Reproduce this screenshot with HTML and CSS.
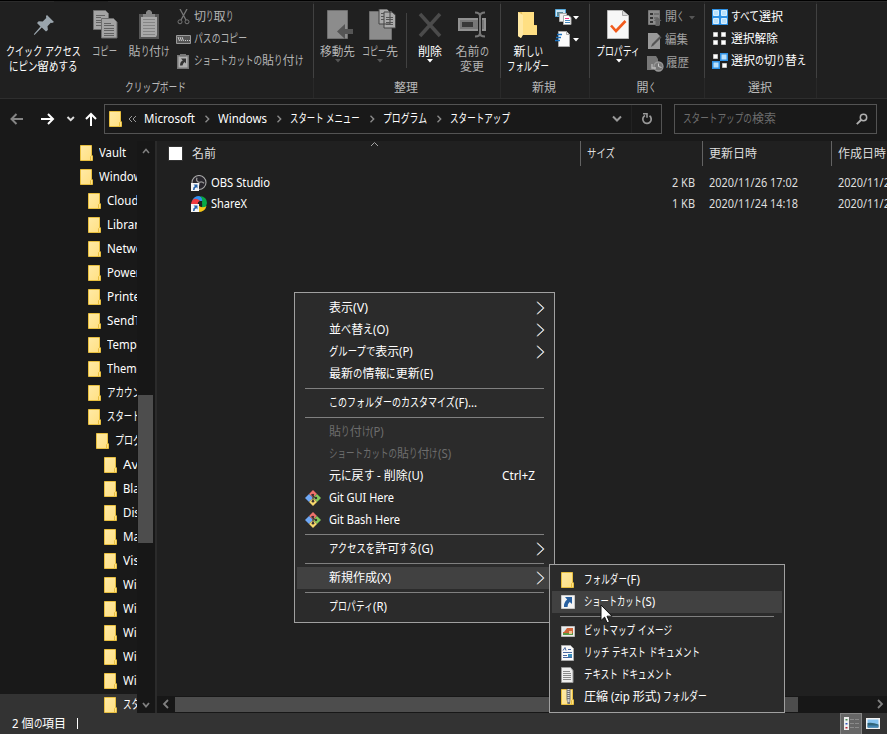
FILE: index.html
```html
<!DOCTYPE html>
<html lang="ja">
<head>
<meta charset="utf-8">
<title>スタートアップ</title>
<link rel="stylesheet" href="styles.css">
</head>
<body>
<svg class="defs" width="0" height="0">
  <defs>
    <linearGradient id="fg" x1="0" y1="0" x2="1" y2="1"><stop offset="0" stop-color="#ffeaa6"/><stop offset="1" stop-color="#ffdf80"/></linearGradient>
    <symbol id="folder" viewBox="0 0 13 16"><path d="M.5.5h11v9.500l1 1v4.500H.5z" fill="url(#fg)" stroke="#e8bf3f"/><path d="M10.500 15.500v-4l1.500-1.500" fill="none" stroke="#e8bf3f"/></symbol>
    <symbol id="git" viewBox="0 0 16 16"><path d="M8 0l4 4-4 4-4-4z" fill="#f0716b"/><path d="M4 4l4 4-4 4-4-4z" fill="#6fa8f5"/><path d="M12 4l4 4-4 4-4-4z" fill="#86c95a"/><path d="M8 8l4 4-4 4-4-4z" fill="#f7d86c"/><path d="M8 4v8M6 4.500l4.500 3.500" stroke="#3a3030" stroke-width="1"/><circle cx="8" cy="4.800" r="1.100" fill="#3a3030"/><circle cx="8" cy="11.300" r="1.300" fill="#3a3030"/><circle cx="11" cy="8" r="1.200" fill="#3a3030"/></symbol>
    <symbol id="link" viewBox="0 0 8 8"><path d="M0 0h8v8H0z" fill="#f4f4f4"/><path d="M2.500 1.500h4v4L5.300 4.300Q3.500 5 3.500 7H2q-.2-2.800 2-4z" fill="#2563ab"/></symbol>
    <symbol id="more" viewBox="0 0 9 14"><g fill="none"><path d="M.6 1l6.500 6-6.500 6" stroke="#4d9be0"/><path d="M1.700 1l6.500 6-6.500 6" stroke="#e0a868"/><path d="M1.200 1l6.500 6-6.500 6" stroke="#f4f4f4" stroke-width=".8"/></g></symbol>
    <symbol id="sep" viewBox="0 0 6 8"><path d="M1.500.8L4.700 4 1.500 7.200" fill="none" stroke="#8a8a8a" stroke-width="1.400"/></symbol>
    <symbol id="tri" viewBox="0 0 6 4"><path d="M0 0h6L3 3.500z" fill="currentColor"/></symbol>
  </defs>
</svg>
<div class="window">
  <div class="tabline"><i></i></div>
  <div class="ribbon">
    <section class="group g-clip">
      <div class="tools">
        <div class="big w88 on"><div class="ico"><svg width="22" height="22" viewBox="0 0 22 22"><path d="M14 1l7 7-2 1-1.200-.2-3.300 3.400.4 3.800-1.900 1.500-4.200-4L1.500 21 .8 20.300 7.500 12.500 4 9l1.700-1.700 4 .3 3.500-3.500L13 2z" fill="#9aa5ad"/></svg></div><span class="t" data-w="75">クイック アクセス</span><span class="t" data-w="69">にピン留めする</span></div>
        <div class="big w33"><div class="ico"><svg width="25" height="29" viewBox="0 0 25 29"><g fill="#a4a4a4" stroke="#6d6d6d"><path d="M.5.500h12l3 3v16H.5z"/><path d="M8.500 8.500h12l3.500 3.500v16H8.500z"/></g><path d="M3 5.500h9M3 7.500h5M3 10.500h5M3 12.500h5M3 15.500h5M11 13.500h7M11 15.500h10M11 18.500h10M11 20.500h10M11 23.500h10M11 25.500h10" stroke="#626262"/></svg></div><span class="t" data-w="25">コピー</span></div>
        <div class="big w56"><div class="ico"><svg width="20" height="29" viewBox="0 0 20 29"><path d="M0 4h20v25H0z" fill="#575757"/><path d="M2 7h16v18l-1 2H2z" fill="#a9a9a9"/><path d="M4 4h3V2l2-2h2l2 2v2h3v3H4z" fill="#858585"/><path d="M4 9.500h12M4 12.500h12M4 15.500h12M4 18.500h12M4 21.500h12M4 24.500h12" stroke="#858585"/></svg></div><span class="t" data-w="41">貼り付け</span></div>
        <div class="smalls">
          <div class="small"><svg width="16" height="16" viewBox="0 0 16 16"><path d="M4 0l6 11M11 0L5 11" stroke="#777" stroke-width="1.300"/><circle cx="4" cy="12.800" r="2" fill="none" stroke="#777"/><circle cx="11" cy="12.800" r="2" fill="none" stroke="#777"/></svg><span class="t" data-w="39">切り取り</span></div>
          <div class="small"><svg width="16" height="16" viewBox="0 0 16 16"><path d="M.5 4.500h14v8H.5z" fill="#555" stroke="#999"/><path d="M2 6l1.500 4M4 6l1.500 4M6 6l1.500 4M9 9.500h1M11 9.500h1M13 9.500h1" stroke="#ccc"/></svg><span class="t" data-w="53">パスのコピー</span></div>
          <div class="small"><svg width="16" height="16" viewBox="0 0 16 16"><path d="M1 2h12v14H1z" fill="#777"/><path d="M2.500 3.500h9v11h-9z" fill="#b0b0b0"/><path d="M4 3.500V1h6v2.500" fill="#777"/><path d="M5 5.500h5v5L8.600 9Q7 10 6.500 12.500H4q0-4 2.800-5z" fill="#333"/></svg><span class="t" data-w="109">ショートカットの貼り付け</span></div>
        </div>
      </div>
      <div class="cap"><span class="t" data-w="61">クリップボード</span></div>
    </section>
    <section class="group g-org">
      <div class="tools">
        <div class="big w43 arr"><div class="ico r3"><svg width="27" height="29" viewBox="0 0 27 29"><path d="M.5.500h20v28H.5z" fill="#8c8c8c" stroke="#6f6f6f"/><path d="M18 14v5h8v5h-8v5l-8-7.500z" fill="#555"/></svg></div><span class="t" data-w="35">移動先</span><svg class="tri" width="6" height="4"><use href="#tri"/></svg></div>
        <div class="big w37 arr"><div class="ico r2"><svg width="27" height="31" viewBox="0 0 27 31"><path d="M.5 2.500h22v28H.5z" fill="#8c8c8c" stroke="#6f6f6f"/><path d="M10 0h8l3 3v12H10zM15 3h8l3.500 3v13H15z" fill="#aaa" stroke="#444"/><path d="M12 4.500h3M12 7.500h3M12 10.500h3M17 8.500h7M17 10.500h7M17 13.500h7M17 15.500h7" stroke="#555"/></svg></div><span class="t" data-w="36">コピー先</span><svg class="tri" width="6" height="4"><use href="#tri"/></svg></div>
        <i class="vline"></i>
        <div class="big w42 on arr"><div class="ico"><svg width="24" height="26" viewBox="0 0 24 26"><path d="M2 2l20 22M22 2L2 24" stroke="#4b4b4b" stroke-width="3.500"/></svg></div><span class="t" data-w="24">削除</span><svg class="tri" width="6" height="4"><use href="#tri"/></svg></div>
        <div class="big w42"><div class="ico"><svg width="28" height="27" viewBox="0 0 28 27"><path d="M1 8h26v11H1z" fill="#777" stroke="#919191" stroke-width="2"/><path d="M4 11h11v5H4z" fill="#383838"/><path d="M20 6h4v15h-4z" fill="#202020"/><path d="M17 1.500q5 0 5 3.500v17q0 3.500-5 3.500M27 1.500q-5 0-5 3.500M22 22q0 3.500 5 3.500" fill="none" stroke="#777" stroke-width="2"/></svg></div><span class="t" data-w="33">名前の</span><span class="t" data-w="24">変更</span></div>
      </div>
      <div class="cap"><span class="t" data-w="24">整理</span></div>
    </section>
    <section class="group g-new">
      <div class="tools">
        <div class="big w54 on"><div class="ico"><svg class="nf" width="19" height="28" viewBox="0 0 19 28"><path d="M0 1h16v13h3v10H4l-1 3-3-2z" fill="#eac35c"/><path d="M4 1h12v13l3 1v9H5z" fill="#ffdf83"/><path d="M0 1l5 3v20l-2 3-3-2z" fill="#ffe8a3"/></svg></div><span class="t" data-w="29">新しい</span><span class="t" data-w="42">フォルダー</span></div>
        <div class="pair">
          <div class="on"><svg width="17" height="17" viewBox="0 0 17 17"><path d="M.5.500h10v7H.5z" fill="#cce6f5" stroke="#57a9db"/><path d="M2 3h6v4H2z" fill="#5a8999"/><path d="M4.500 4.500h7v8h-7z" fill="#efefef" stroke="#aaa"/><path d="M8.500 6.500h5l2.500 2v7H8.500z" fill="#fff" stroke="#aaa"/><path d="M10 9.500h4" stroke="#e38"/><path d="M10 11.500h5M10 13.500h5" stroke="#48b"/></svg><svg class="tri" width="6" height="4"><use href="#tri"/></svg></div>
          <div class="on"><svg width="17" height="17" viewBox="0 0 17 17"><path d="M3.500.500h8l3 3v12h-11z" fill="#fafafa" stroke="#aaa"/><path d="M11.500.500v3h3" fill="none" stroke="#aaa"/><path d="M2 3.500h5M1 6.500h5M0 9.500h5" stroke="#1b70bd" stroke-width="1.500"/></svg><svg class="tri" width="6" height="4"><use href="#tri"/></svg></div>
        </div>
      </div>
      <div class="cap"><span class="t" data-w="24">新規</span></div>
    </section>
    <section class="group g-open">
      <div class="tools">
        <div class="big w58 on arr"><div class="ico"><svg width="22" height="29" viewBox="0 0 22 29"><path d="M.5.500h15l6 5v23H.5z" fill="#f7f7f7" stroke="#b9b9b9"/><path d="M15.500.500v5h5" fill="#ddd" stroke="#aaa"/><path d="M4 15.500l5 5.500 9.500-10" fill="none" stroke="#f15a1c" stroke-width="2.600"/></svg></div><span class="t" data-w="44">プロパティ</span><svg class="tri" width="6" height="4"><use href="#tri"/></svg></div>
        <div class="smalls open">
          <div class="small dim"><svg width="16" height="16" viewBox="0 0 16 16"><path d="M1.500.500h11v14h-11z" fill="#8c8c8c" stroke="#777"/><path d="M3 3h3v2H3zM3 7h3v2H3zM3 11h3v2H3z" fill="#333"/><path d="M7 4h5M7 8h3" stroke="#555"/><path d="M10.500 7l4 4h-2v5h-4v-5h-2z" fill="#666"/></svg><span class="t" data-w="19">開く</span><svg class="tri" width="6" height="4"><use href="#tri"/></svg></div>
          <div class="small dim"><svg width="16" height="16" viewBox="0 0 16 16"><path d="M1 0h9l3 3v13H1z" fill="#999"/><path d="M4 14l1-3 8-8 1.500 1.500-8 8z" fill="#555"/></svg><span class="t" data-w="23">編集</span></div>
          <div class="small dim"><svg width="17" height="16" viewBox="0 0 17 16"><path d="M0 0h9l2 3v11H0z" fill="#777"/><circle cx="11.500" cy="10.500" r="4.500" fill="#777" stroke="#999" stroke-width="1.300"/><path d="M11.500 7.500v3l3 1" fill="none" stroke="#ccc"/><path d="M5 8v4h4" fill="none" stroke="#bbb" stroke-width="1.300"/></svg><span class="t" data-w="23">履歴</span></div>
        </div>
      </div>
      <div class="cap"><span class="t" data-w="19">開く</span></div>
    </section>
    <section class="group g-sel">
      <div class="tools">
        <div class="smalls sel">
          <div class="small on"><svg width="16" height="16" viewBox="0 0 16 16"><path d="M0 0h16v16H0z" fill="#2f91e4"/><path d="M1.500 1.500h5v5h-5zM9.500 1.500h5v5h-5zM1.500 9.500h5v5h-5zM9.500 9.500h5v5h-5z" fill="#b9e0fb" stroke="#d8efff"/></svg><span class="t" data-w="52">すべて選択</span></div>
          <div class="small on"><svg width="16" height="16" viewBox="0 0 16 16"><path d="M1.500 1.500h4v4h-4zM9.500 1.500h4v4h-4zM1.500 9.500h4v4h-4zM9.500 9.500h4v4h-4z" fill="#fff" stroke="#c3c3c3"/></svg><span class="t" data-w="47">選択解除</span></div>
          <div class="small on"><svg width="16" height="16" viewBox="0 0 16 16"><path d="M8 0h8v8H8zM0 8h8v8H0z" fill="#2f91e4"/><path d="M9.500 1.500h5v5h-5zM1.500 9.500h5v5h-5z" fill="#b9e0fb"/><path d="M1.500 1.500h4v4h-4zM10.500 10.500h4v4h-4z" fill="#fff" stroke="#c3c3c3"/></svg><span class="t" data-w="75">選択の切り替え</span></div>
        </div>
      </div>
      <div class="cap"><span class="t" data-w="24">選択</span></div>
    </section>
  </div>

  <nav class="navbar">
    <div class="arrows">
      <svg width="94" height="16" viewBox="0 0 94 16" fill="none" stroke-width="2"><path d="M13 8H1.500M6.500 3l-5 5 5 5" stroke="#858585"/><path d="M31 8h12M38 3l5 5-5 5" stroke="#fff"/><path d="M57.500 6l3.200 3.200L63.900 6" stroke="#ddd"/><path d="M81 15V3M76 8l5-5 5 5" stroke="#fff"/></svg>
    </div>
    <div class="address">
      <svg class="af" width="13" height="16"><use href="#folder"/></svg>
      <svg class="dbl" width="9" height="8" viewBox="0 0 9 8"><path d="M4 1L1 4l3 3M8 1L5 4l3 3" fill="none" stroke="#999"/></svg>
      <span class="t" data-w="51">Microsoft</span><svg class="cs" width="6" height="8"><use href="#sep"/></svg>
      <span class="t" data-w="49">Windows</span><svg class="cs" width="6" height="8"><use href="#sep"/></svg>
      <span class="t" data-w="70">スタート メニュー</span><svg class="cs" width="6" height="8"><use href="#sep"/></svg>
      <span class="t" data-w="44">プログラム</span><svg class="cs" width="6" height="8"><use href="#sep"/></svg>
      <span class="t" data-w="60">スタートアップ</span>
      <svg class="drop" width="10" height="8" viewBox="0 0 10 8"><path d="M1 1.500l4 4 4-4" fill="none" stroke="#999" stroke-width="2"/></svg>
      <div class="refresh"><svg width="12" height="12" viewBox="0 0 12 12"><path d="M4 2.500a4.200 4.200 0 1 0 4.500.3" fill="none" stroke="#999" stroke-width="1.700"/><path d="M2 .8h4v4" fill="none" stroke="#999" stroke-width="1.600"/></svg></div>
    </div>
    <div class="search"><span class="t" data-w="93">スタートアップの検索</span><svg width="12" height="12" viewBox="0 0 12 12"><circle cx="7.500" cy="4.500" r="3.200" fill="none" stroke="#b0b0b0" stroke-width="1.500"/><path d="M5 7L.8 11.200" stroke="#b0b0b0" stroke-width="1.900"/></svg></div>
  </nav>

  <main class="main">
    <aside class="side">
      <div class="tree">
        <div class="node l0"><svg width="13" height="16"><use href="#folder"/></svg><span class="t" data-w="27">Vault</span></div>
        <div class="node l0"><svg width="13" height="16"><use href="#folder"/></svg><span class="t" data-w="49">Windows</span></div>
        <div class="node l1"><svg width="13" height="16"><use href="#folder"/></svg><span class="t" data-w="60">CloudStore</span></div>
        <div class="node l1"><svg width="13" height="16"><use href="#folder"/></svg><span class="t" data-w="47">Libraries</span></div>
        <div class="node l1"><svg width="13" height="16"><use href="#folder"/></svg><span class="t" data-w="102">Network Shortcuts</span></div>
        <div class="node l1"><svg width="13" height="16"><use href="#folder"/></svg><span class="t" data-w="59">PowerShell</span></div>
        <div class="node l1"><svg width="13" height="16"><use href="#folder"/></svg><span class="t" data-w="94">Printer Shortcuts</span></div>
        <div class="node l1"><svg width="13" height="16"><use href="#folder"/></svg><span class="t" data-w="40">SendTo</span></div>
        <div class="node l1"><svg width="13" height="16"><use href="#folder"/></svg><span class="t" data-w="55">Templates</span></div>
        <div class="node l1"><svg width="13" height="16"><use href="#folder"/></svg><span class="t" data-w="41">Themes</span></div>
        <div class="node l1"><svg width="13" height="16"><use href="#folder"/></svg><span class="t" data-w="75">アカウントの画像</span></div>
        <div class="node l1"><svg width="13" height="16"><use href="#folder"/></svg><span class="t" data-w="70">スタート メニュー</span></div>
        <div class="node l2"><svg width="13" height="16"><use href="#folder"/></svg><span class="t" data-w="45">プログラム</span></div>
        <div class="node l3"><svg width="13" height="16"><use href="#folder"/></svg><span class="t" data-w="34">Avast</span></div>
        <div class="node l3"><svg width="13" height="16"><use href="#folder"/></svg><span class="t" data-w="60">Blackmagic</span></div>
        <div class="node l3"><svg width="13" height="16"><use href="#folder"/></svg><span class="t" data-w="41">Discord</span></div>
        <div class="node l3"><svg width="13" height="16"><use href="#folder"/></svg><span class="t" data-w="71">Maintenance</span></div>
        <div class="node l3"><svg width="13" height="16"><use href="#folder"/></svg><span class="t" data-w="66">Visual Code</span></div>
        <div class="node l3"><svg width="13" height="16"><use href="#folder"/></svg><span class="t" data-w="49">Windows</span></div>
        <div class="node l3"><svg width="13" height="16"><use href="#folder"/></svg><span class="t" data-w="49">Windows</span></div>
        <div class="node l3"><svg width="13" height="16"><use href="#folder"/></svg><span class="t" data-w="49">Windows</span></div>
        <div class="node l3"><svg width="13" height="16"><use href="#folder"/></svg><span class="t" data-w="49">Windows</span></div>
        <div class="node l3"><svg width="13" height="16"><use href="#folder"/></svg><span class="t" data-w="49">Windows</span></div>
        <div class="node l3 cur"><svg width="13" height="16"><use href="#folder"/></svg><span class="t" data-w="60">スタートアップ</span></div>
      </div>
      <div class="vbar"><svg width="8" height="6" viewBox="0 0 8 6"><path d="M1 5l3-3.500L7 5" fill="none" stroke="#808080" stroke-width="1.500"/></svg><i class="thumb"></i><svg class="down" width="8" height="6" viewBox="0 0 8 6"><path d="M1 1l3 3.500L7 1" fill="none" stroke="#808080" stroke-width="1.800"/></svg></div>
    </aside>
    <section class="files">
      <div class="head">
        <div class="c1"><i class="check"></i><span class="t" data-w="24">名前</span><svg class="sort" width="9" height="6" viewBox="0 0 9 6"><path d="M1 5l3.500-3.500L8 5" fill="none" stroke="#a5a5a5"/></svg></div>
        <div class="c2"><span class="t" data-w="28">サイズ</span></div>
        <div class="c3"><span class="t" data-w="48">更新日時</span></div>
        <div class="c4"><span class="t" data-w="48">作成日時</span></div>
      </div>
      <div class="rows">
        <div class="file"><div class="c1"><svg width="16" height="16" viewBox="0 0 16 16"><circle cx="8" cy="7.500" r="7" fill="#28262c" stroke="#a8a8a8" stroke-width="1.100"/><path d="M6 2.800Q4.500 6 8 7.500q3-1.500 5 .8M8 7.500q.5 3.500-3 5" fill="none" stroke="#9a9a9a" stroke-width="1.300"/><use href="#link" x="0" y="8" width="8" height="8"/></svg><span class="t" data-w="59">OBS Studio</span></div><div class="c2"><span class="t" data-w="23">2 KB</span></div><div class="c3"><span class="t" data-w="89">2020/11/26 17:02</span></div><div class="c4"><span class="t" data-w="89">2020/11/26 17:02</span></div></div>
        <div class="file"><div class="c1"><svg width="16" height="16" viewBox="0 0 16 16"><path d="M1 5Q3 0 8 0q4 1 4 5l-3 0Q4 2 1 5z" fill="#3190ef"/><path d="M9 0q7 1 7 7-1 6-6 6 2-3 1-6.500 1-4-2-6.500z" fill="#08a846"/><path d="M15.500 10q-1.500 6-8.500 6-1-4 1-6 4 2.500 7.500 0z" fill="#f8c718"/><path d="M0 8q1-6 6-5 2 .3 3 2-3 1-2 5-4 1-7-2z" fill="#ef3940"/><circle cx="8.800" cy="7.500" r="1.900" fill="#202020"/><use href="#link" x="0" y="8" width="8" height="8"/></svg><span class="t" data-w="36">ShareX</span></div><div class="c2"><span class="t" data-w="23">1 KB</span></div><div class="c3"><span class="t" data-w="89">2020/11/24 14:18</span></div><div class="c4"><span class="t" data-w="89">2020/11/24 14:18</span></div></div>
      </div>
      <div class="hbar"><svg width="17" height="10" viewBox="0 0 17 10"><path d="M10 1L6 5l4 4" fill="none" stroke="#808080" stroke-width="1.800"/></svg><i class="thumb"></i><svg class="end" width="17" height="10" viewBox="0 0 17 10"><path d="M8 1l4 4-4 4" fill="none" stroke="#808080" stroke-width="1.800"/></svg></div>
    </section>
  </main>

  <footer class="status"><span class="t" data-w="54">2 個の項目</span><i class="bar"></i><div class="view active"><svg width="18" height="14" viewBox="0 0 18 14"><path d="M2 0h5v13H2z" fill="#eee"/><path d="M3.500 2h2v1.500h-2z" fill="#485"/><path d="M3.500 6h2v1.500h-2z" fill="#35b"/><path d="M3.500 10h2v1.500h-2z" fill="#b23"/><path d="M8 2.500h4M13 2.500h4M8 6.500h4M13 6.500h4M8 10.500h4M13 10.500h4" stroke="#8a8a8a"/></svg></div><div class="view"><svg width="14" height="11" viewBox="0 0 14 11"><path d="M0 0h14v11H0z" fill="#f3f3f3"/><path d="M1.500 1.500h11v8h-11z" fill="#87c3ef"/><path d="M1.500 5q5-1 11 1.500v3h-11z" fill="#316579"/><path d="M2 7.500h10v2H2z" fill="#4385b4"/></svg></div></footer>
</div>

<div class="menu ctx">
  <div class="item"><span class="t" data-w="39">表示(V)</span><svg class="more" width="9" height="14"><use href="#more"/></svg></div>
  <div class="item"><span class="t" data-w="60">並べ替え(O)</span><svg class="more" width="9" height="14"><use href="#more"/></svg></div>
  <div class="item"><span class="t" data-w="84">グループで表示(P)</span><svg class="more" width="9" height="14"><use href="#more"/></svg></div>
  <div class="item"><span class="t" data-w="104">最新の情報に更新(E)</span></div>
  <hr>
  <div class="item"><span class="t" data-w="148">このフォルダーのカスタマイズ(F)...</span></div>
  <hr>
  <div class="item off"><span class="t" data-w="55">貼り付け(P)</span></div>
  <div class="item off"><span class="t" data-w="122">ショートカットの貼り付け(S)</span></div>
  <div class="item"><span class="t" data-w="94">元に戻す - 削除(U)</span><span class="t key" data-w="33">Ctrl+Z</span></div>
  <div class="item"><svg class="mi" width="16" height="16"><use href="#git"/></svg><span class="t" data-w="65">Git GUI Here</span></div>
  <div class="item"><svg class="mi" width="16" height="16"><use href="#git"/></svg><span class="t" data-w="71">Git Bash Here</span></div>
  <hr>
  <div class="item"><span class="t" data-w="104">アクセスを許可する(G)</span><svg class="more" width="9" height="14"><use href="#more"/></svg></div>
  <hr>
  <div class="item hot"><span class="t" data-w="62">新規作成(X)</span><svg class="more" width="9" height="14"><use href="#more"/></svg></div>
  <hr>
  <div class="item"><span class="t" data-w="58">プロパティ(R)</span></div>
</div>

<div class="menu sub">
  <div class="item"><svg class="mi" width="13" height="16"><use href="#folder"/></svg><span class="t" data-w="56">フォルダー(F)</span></div>
  <div class="item hot"><svg class="mi" width="14" height="14" viewBox="0 0 14 14"><path d="M.5.500h13v13H.5z" fill="#f4f4f4" stroke="#c9c9c9"/><path d="M4 2h7v7L8.800 7Q6.500 8.500 6.500 12H3q-.5-4.500 3.200-7.500z" fill="#2860a0"/></svg><span class="t" data-w="71">ショートカット(S)</span></div>
  <hr>
  <div class="item"><svg class="mi" width="14" height="11" viewBox="0 0 14 11"><path d="M.5.500h13v10H.5z" fill="#eee" stroke="#bbb"/><path d="M2 2h10v7H2z" fill="#cf6439"/><path d="M2 7h10v2H2z" fill="#5a9844"/><path d="M2 2h4l-3 4H2z" fill="#dce9ee"/><path d="M8 5h3v3H8z" fill="#edc594"/></svg><span class="t" data-w="88">ビットマップ イメージ</span></div>
  <div class="item"><svg class="mi" width="13" height="16" viewBox="0 0 13 16"><path d="M.5.500h9l3 3v12H.5z" fill="#fafafa" stroke="#aaa"/><path d="M2 5.500l2-3 1 3M7 4.500h3M2 7.500h9M2 10.500h4M2 12.500h9" fill="none" stroke="#4867a0"/><path d="M7 9h4v3H7z" fill="#398dbb"/></svg><span class="t" data-w="116">リッチ テキスト ドキュメント</span></div>
  <div class="item"><svg class="mi" width="13" height="16" viewBox="0 0 13 16"><path d="M.5.500h9l2.500 3v12H.5z" fill="#eee" stroke="#999"/><path d="M2 4.500h7M2 6.500h8M2 8.500h8M2 10.500h8M2 12.500h8" stroke="#888"/></svg><span class="t" data-w="88">テキスト ドキュメント</span></div>
  <div class="item"><svg class="mi" width="13" height="16" viewBox="0 0 13 16"><use href="#folder" width="13" height="16"/><path d="M5.500 0h4v10l-.5 5H6.500L5.500 10z" fill="#777"/><path d="M7.500 0v10" stroke="#ddd" stroke-width="2" stroke-dasharray="1 1"/><path d="M6.500 10h2v3h-2z" fill="#ccc"/></svg><span class="t" data-w="123">圧縮 (zip 形式) フォルダー</span></div>
</div>
<svg class="cursor" width="13" height="20" viewBox="0 0 13 20"><path d="M1 1v15.500l3.600-3.400 2.500 5.600 2.400-1-2.500-5.500h5z" fill="#fff" stroke="#111"/></svg>
<script src="fit.js"></script>
</body>
</html>
```
FILE: styles.css
```css
* { box-sizing: border-box; }
html, body { margin: 0; width: 887px; height: 734px; overflow: hidden; background: #191919; }
body { position: relative; font: 12px/15px "Noto Sans", "Noto Sans CJK JP", sans-serif; color: #fff; }
svg { display: block; flex: none; }
.defs { position: absolute; }
.t { display: inline-block; white-space: pre; flex: none; height: 15px; line-height: 15px; }
.run { display: inline-block; transform-origin: 0 50%; white-space: pre; }
.window { height: 734px; display: flex; flex-direction: column; }
.tabline { height: 2px; background: #2b2b2b; border-top: 1px solid #000; padding-left: 54px; }
.tabline i { display: block; width: 54px; height: 1px; background: #202020; }

.ribbon { height: 97px; display: flex; background: #202020; border-bottom: 1px solid #2e2e2e; color: #b4b4b4; }
.group { display: flex; flex-direction: column; border-right: 1px solid #292929; position: relative; padding-top: 2px; }
.group::after { content: ""; position: absolute; right: -1px; top: 2px; width: 1px; height: 74px; background: #414141; }
.g-clip { width: 314px; }
.g-org { width: 187px; }
.g-new { width: 89px; }
.g-open { width: 115px; }
.g-sel { width: 112px; }
.tools { height: 74px; display: flex; }
.cap { height: 20px; display: flex; align-items: center; justify-content: center; padding: 0 2px 1px 0; color: #bababa; }
.big { display: flex; flex-direction: column; align-items: center; flex: none; }
.ico { height: 40px; padding-top: 1px; display: flex; align-items: center; }
.ico.r3 { padding-left: 5px; }
.ico.r2 { padding-left: 4px; }
.nf { margin-right: 2px; }
.on { color: #fff; }
.w88 { width: 88px; }
.w88 .t { margin-left: -2px; }
.w33 { width: 33px; }
.w33 .ico { padding-left: 1px; }
.w56 { width: 56px; }
.w43 { width: 43px; margin-left: 2px; }
.w37 { width: 42px; }
.w42 { width: 42px; }
.w54 { width: 54px; }
.w58 { width: 58px; }
.w58 .ico { margin-left: -2px; }
.w58 .t { margin-left: -2px; }
.tri { color: #555; }
.on .tri { color: #fff; }
.vline { width: 1px; height: 55px; background: #414141; margin: 9px 2px 0 5px; }
.smalls { display: flex; flex-direction: column; padding-top: 2px; margin-left: -1px; }
.small { height: 22px; display: flex; align-items: center; gap: 2px; }
.small .t { margin-top: -2px; }
.small .tri { margin-left: 3px; }
.smalls.open { margin-left: -1px; }
.open .small { height: 23px; }
.dim { color: #a0a0a0; }
.smalls.sel { margin-left: 7px; }
.sel .small { gap: 3px; }
.pair { display: flex; flex-direction: column; gap: 5px; padding-top: 5px; }
.pair > div { display: flex; align-items: center; gap: 1px; }

.navbar { height: 42px; display: flex; align-items: flex-start; padding: 5px 0 0 10px; }
.arrows { width: 94px; padding-top: 7px; }
.address { width: 558px; height: 30px; border: 1px solid #535353; display: flex; align-items: center; padding-left: 4px; }
.dbl { margin: 0 7px 0 6px; }
.cs { margin: 0 8px 0 9px; }
.address .t { margin-top: -1px; }
.drop { margin-left: 102px; }
.refresh { margin-left: 9px; border-left: 1px solid #222; padding: 8px 0 8px 9px; }
.search { width: 203px; height: 30px; margin-left: 12px; border: 1px solid #535353; display: flex; align-items: center; justify-content: space-between; padding: 0 8px; color: #6d6d6d; }
.search .t { margin-top: -1px; }

.main { height: 572px; display: flex; }
.side { width: 157px; display: flex; border-right: 2px solid #2b2b2b; }
.tree { width: 137px; height: 572px; overflow: hidden; }
.node { height: 24px; display: flex; align-items: center; gap: 6px; }
.node .t { margin-top: -1px; }
.l0 { padding-left: 80px; }
.l1 { padding-left: 88px; }
.l2 { padding-left: 96px; }
.l3 { padding-left: 104px; }
.cur { background: linear-gradient(#191919 0 1px, #333 1px); }
.vbar { width: 18px; background: #171717; display: flex; flex-direction: column; padding: 7px 0 5px 1px; }
.vbar svg { margin-left: 4px; }
.vbar .thumb { width: 15px; height: 148px; margin-top: 241px; background: #4d4d4d; }
.vbar .down { margin-top: auto; }
.files { width: 730px; background: #202020; display: flex; flex-direction: column; overflow: hidden; }
.head, .file { display: flex; flex: none; width: 770px; }
.c1 { width: 423px; display: flex; align-items: center; }
.c2 { width: 122px; display: flex; align-items: center; }
.c3 { width: 129px; display: flex; align-items: center; }
.c4 { width: 96px; display: flex; align-items: center; }
.head { height: 25px; color: #dedede; position: relative; }
.head .c2, .head .c3, .head .c4 { border-left: 1px solid #636363; padding-left: 6px; }
.check { width: 13px; height: 13px; background: #fff; outline: 1px solid #333; margin: 0 10px 0 12px; }
.sort { position: absolute; left: 213px; top: 0; }
.rows { padding-top: 6px; flex: 1; }
.file { height: 21px; color: #dedede; }
.file .c1 { padding-left: 34px; gap: 4px; color: #fff; }
.file .c2 { justify-content: flex-end; padding-right: 7px; }
.file .c3, .file .c4 { padding-left: 7px; }
.hbar { height: 17px; background: #171717; display: flex; align-items: center; padding: 0 0 1px 1px; }
.hbar .thumb { width: 623px; height: 15px; background: #4d4d4d; }
.hbar .end { margin-left: auto; }

.status { height: 21px; background: #333; display: flex; align-items: center; padding-left: 12px; }
.bar { width: 1px; height: 11px; background: #fff; margin-left: 11px; margin-right: auto; }
.view { width: 25px; height: 21px; display: flex; align-items: center; justify-content: center; padding-right: 3px; }
.view.active { width: 22px; background: #666; border: 1px solid #858585; border-bottom: 0; padding: 0; }

.menu { position: absolute; border: 1px solid #a0a0a0; background: #2b2b2b; padding: 4px 2px; }
.ctx { left: 294px; top: 292px; width: 261px; height: 331px; }
.sub { left: 549px; top: 564px; width: 236px; height: 149px; }
.item { height: 22px; display: grid; grid-template-columns: 32px 1fr auto; align-items: center; padding-right: 7px; }
.item .t { grid-column: 2; grid-row: 1; margin-top: -2px; }
.mi { grid-column: 1; grid-row: 1; margin-left: 8px; }
.sub .mi { margin-left: 9px; }
.item .more { grid-column: 3; grid-row: 1; margin-top: -1px; }
.item .key { grid-column: 3; margin-right: 10px; }
.hot { background: #414141; }
.off { color: #6d6d6d; }
.menu hr { height: 1px; border: 0; margin: 3px 8px; background: #808080; }
.cursor { position: absolute; left: 600px; top: 604px; }
```
FILE: fit.js
```javascript
// Kanji keep their full width, Latin is slightly condensed, and kana take the rest of the label's width.
const kinds = [
  ["kanji", /[\u4e00-\u9fff]+/y],
  ["kana", /[\u3040-\u30ff]+/y],
  ["latin", /[^\u4e00-\u9fff\u3040-\u30ff]+/y]
];
document.querySelectorAll(".t[data-w]").forEach(label => {
  const text = label.textContent;
  const target = Number(label.dataset.w);
  const runs = [];
  label.textContent = "";
  for (let i = 0; i < text.length;) {
    for (const [kind, re] of kinds) {
      re.lastIndex = i;
      const m = re.exec(text);
      if (!m) continue;
      const el = document.createElement("span");
      el.className = "run";
      el.textContent = m[0];
      label.append(el);
      runs.push({ kind, el, w: el.getBoundingClientRect().width });
      i += m[0].length;
      break;
    }
  }
  const sum = k => runs.filter(r => r.kind === k).reduce((a, r) => a + r.w, 0);
  const flexible = sum("kana") ? "kana" : sum("latin") ? "latin" : "kanji";
  runs.forEach(r => {
    let s = r.kind === "latin" ? 0.95 : 1;
    if (r.kind === flexible) {
      const fixed = (flexible === "kanji" ? 0 : sum("kanji")) + (flexible === "kana" ? sum("latin") * 0.95 : 0);
      s = (target - fixed) / sum(flexible);
    }
    r.el.style.transform = `scaleX(${s})`;
    r.el.style.marginRight = `${r.w * (s - 1)}px`;
  });
  label.style.width = `${target}px`;
});
```
